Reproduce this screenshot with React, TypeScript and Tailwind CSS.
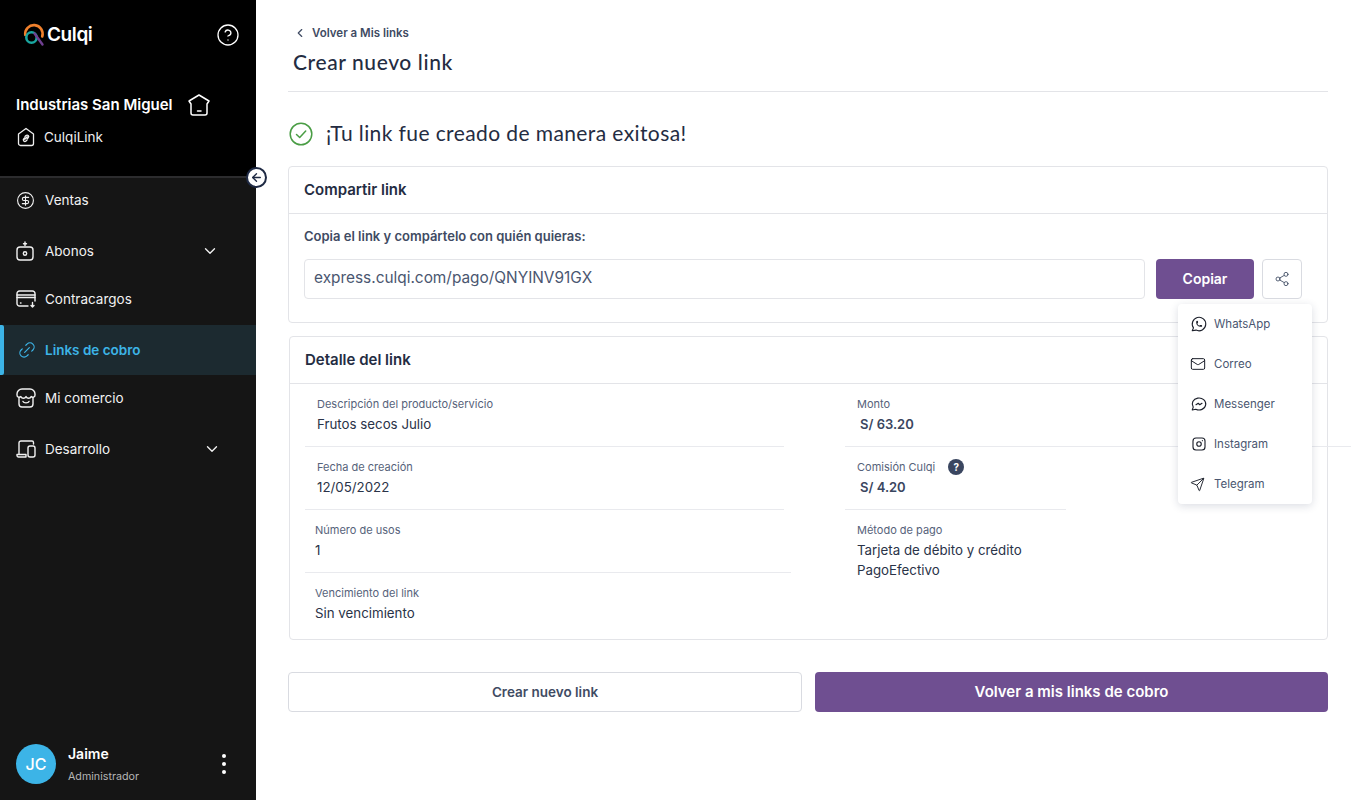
import { ReactNode } from 'react'
import {
  ArrowLeft,
  ChevronDown,
  ChevronLeft,
  CircleDollarSign,
  CircleHelp,
  Link2,
  Mail,
  Send,
  Share2,
} from 'lucide-react'
import { TbBrandInstagram, TbBrandMessenger, TbBrandWhatsapp } from 'react-icons/tb'

function CulqiLogo() {
  return (
    <svg width="22" height="24" viewBox="0 0 22 24" fill="none" className="-mt-[1px]">
      <path d="M2.300 12A8.700 8.700 0 1 1 19.200 13.500" stroke="#f0802c" strokeWidth="2.600" strokeLinecap="round" />
      <circle cx="8.500" cy="14.500" r="5.200" stroke="#1aa6a0" strokeWidth="2.600" />
      <path d="M11.500 10.500l8 11" stroke="#6f3f91" strokeWidth="2.400" strokeLinecap="round" />
    </svg>
  )
}

function CheckIcon() {
  return (
    <svg width="24" height="24" viewBox="0 0 24 24" fill="none" stroke="#4a9d45" strokeWidth="1.500" strokeLinecap="round" strokeLinejoin="round">
      <circle cx="12" cy="12" r="10.800" />
      <path d="M7.500 12.500l3.200 3 6-6.500" />
    </svg>
  )
}

function HomeIcon() {
  return (
    <svg width="24" height="24" viewBox="0 0 24 24" fill="none" stroke="currentColor" strokeWidth="1.500" strokeLinejoin="round" strokeLinecap="round">
      <path d="M12 2 22 8l-2 3v9a2 2 0 0 1-2 2H6a2 2 0 0 1-2-2v-9L2 8z" />
      <path d="M10.500 18h3.500" />
    </svg>
  )
}

function TagLinkIcon() {
  return (
    <svg width="18" height="20" viewBox="0 0 18 20" fill="none" stroke="currentColor" strokeWidth="1.300" strokeLinejoin="round" strokeLinecap="round">
      <path d="M9 1.500 16.500 7v9.500a2 2 0 0 1-2 2h-11a2 2 0 0 1-2-2V7z" />
      <path d="M8 9.500l1-1a1.500 1.500 0 0 1 2.200 2.200l-1 1M10 13l-1 1a1.500 1.500 0 0 1-2.200-2.200l1-1M7.800 12.200l2.400-2.400" />
    </svg>
  )
}

function AbonosIcon() {
  return (
    <svg width="18" height="20" viewBox="0 0 18 20" fill="none" stroke="currentColor" strokeWidth="1.400" strokeLinecap="round" strokeLinejoin="round">
      <rect x="1" y="6" width="16" height="13" rx="3" />
      <circle cx="9" cy="12.500" r="1.700" />
      <path d="M9 1v3.500M7.500 2.700h3" />
    </svg>
  )
}

function ContracargosIcon() {
  return (
    <svg width="20" height="18" viewBox="0 0 20 18" fill="none" stroke="currentColor" strokeWidth="1.400" strokeLinecap="round" strokeLinejoin="round">
      <path d="M12 16H3.500A2.500 2.500 0 0 1 1 13.500v-10A2.500 2.500 0 0 1 3.500 1h13A2.500 2.500 0 0 1 19 3.500V11" />
      <path d="M1 5h18M1 7.500h18M4.500 13h.5M16.500 12.500V17M15 15.500l1.500 1.500 1.500-1.500" />
    </svg>
  )
}

function StoreFaceIcon() {
  return (
    <svg width="20" height="20" viewBox="0 0 20 20" fill="none" stroke="currentColor" strokeWidth="1.400" strokeLinecap="round" strokeLinejoin="round">
      <path d="M6 1h8a5 5 0 0 1 5 5v1a2.200 2.200 0 0 1-3.800 1.600 2.900 2.900 0 0 1-5.200 0 2.900 2.900 0 0 1-5.200 0A2.200 2.200 0 0 1 1 7V6a5 5 0 0 1 5-5z" />
      <path d="M3 10v6a3 3 0 0 0 3 3h8a3 3 0 0 0 3-3v-6" />
      <path d="M7 13.500c.8 1.800 5.200 1.800 6 0" />
    </svg>
  )
}

function DevicesIcon() {
  return (
    <svg width="20" height="18" viewBox="0 0 20 18" fill="none" stroke="currentColor" strokeWidth="1.400" strokeLinecap="round" strokeLinejoin="round">
      <path d="M3 14V3a2 2 0 0 1 2-2h11a1.500 1.500 0 0 1 1.500 1.500V4" />
      <path d="M1 14.500h9v2.500H2.500A1.500 1.500 0 0 1 1 15.500z" />
      <rect x="12" y="6" width="7" height="11" rx="2" />
    </svg>
  )
}

function NavItem({ icon, label, chevron, chevronClass }: { icon: ReactNode; label: string; chevron?: boolean; chevronClass?: string }) {
  return (
    <div className="flex h-full items-center pl-[16px] text-[13.5px] text-[#f1f1f1]">
      <span className="flex w-[29px] shrink-0 items-center">{icon}</span>
      <span>{label}</span>
      {chevron && <ChevronDown className={chevronClass} size={18} strokeWidth={1.800} />}
    </div>
  )
}

function Sidebar() {
  return (
    <aside className="relative flex h-[800px] w-[256px] shrink-0 flex-col bg-[#151515] font-['Inter',sans-serif] text-white">
      <div className="h-[178px] shrink-0 border-b-2 border-[#2c2c2e] bg-black">
        <div className="flex items-center pl-[23px] pr-[16px] pt-[23px]">
          <CulqiLogo />
          <span className="ml-[2px] text-[19px] font-semibold leading-[24px] tracking-[-0.4px]">Culqi</span>
          <CircleHelp className="ml-auto" size={24} strokeWidth={1.300} />
        </div>
        <div className="mt-[46px] flex items-center pl-[16px]">
          <span className="text-[15px] font-semibold leading-[24px]">Industrias San Miguel</span>
          <span className="ml-[14px]"><HomeIcon /></span>
        </div>
        <div className="mt-[10px] flex items-center pl-[17px] text-[13.5px] text-[#eeeeee]">
          <TagLinkIcon />
          <span className="ml-[9px]">CulqiLink</span>
        </div>
      </div>
      <div className="absolute left-[246px] top-[167px] flex h-[21px] w-[21px] items-center justify-center rounded-full border-2 border-[#1f2a44] bg-white text-[#1f2a44]">
        <ArrowLeft size={13} strokeWidth={2.500} />
      </div>
      <nav>
        <div className="h-[44px]"><NavItem icon={<CircleDollarSign size={19} strokeWidth={1.400} />} label="Ventas" /></div>
        <div className="h-[58px]"><NavItem icon={<AbonosIcon />} label="Abonos" chevron chevronClass="ml-auto mr-[37px]" /></div>
        <div className="mb-[7px] h-[38px]"><NavItem icon={<ContracargosIcon />} label="Contracargos" /></div>
        <div className="flex h-[50px] items-center bg-[#1c2a30] text-[#3cb4e7]">
          <span className="h-full w-[4px] rounded-r-[2px] bg-[#3cb4e7]" />
          <Link2 className="ml-[13px] -rotate-45" size={20} strokeWidth={1.400} />
          <span className="ml-[8px] text-[13.5px] font-semibold">Links de cobro</span>
        </div>
        <div className="h-[46px]"><NavItem icon={<StoreFaceIcon />} label="Mi comercio" /></div>
        <div className="h-[56px]"><NavItem icon={<DevicesIcon />} label="Desarrollo" chevron chevronClass="ml-auto mr-[35px]" /></div>
      </nav>
      <div className="mt-auto flex items-center pb-[16px] pl-[16px] pr-[30px]">
        <div className="flex h-[40px] w-[40px] items-center justify-center rounded-full bg-[#3cb4e7] text-[16px] font-medium">JC</div>
        <div className="ml-[12px]">
          <div className="text-[14px] font-semibold leading-[20px]">Jaime</div>
          <div className="mt-[6px] text-[10.7px] leading-[14px] text-[#b5b5b5]">Administrador</div>
        </div>
        <div className="ml-auto flex flex-col gap-[4px]">
          <span className="h-[4px] w-[4px] rounded-full bg-white" />
          <span className="h-[4px] w-[4px] rounded-full bg-white" />
          <span className="h-[4px] w-[4px] rounded-full bg-white" />
        </div>
      </div>
    </aside>
  )
}

function Field({ label, value, className, strong, children }: { label: string; value: ReactNode; className: string; strong?: boolean; children?: ReactNode }) {
  return (
    <div className={className}>
      <div className="flex items-center text-[11px] leading-[16px] text-[#56627a]">
        {label}
        {children}
      </div>
      <div className={strong ? 'mt-[2px] pl-[3px] text-[13px] font-semibold leading-[20px] text-[#3a4660]' : 'mt-[2px] text-[13.3px] leading-[20px] text-[#2a3348]'}>{value}</div>
    </div>
  )
}

const shareItems = [
  { label: 'WhatsApp', icon: <TbBrandWhatsapp size={18} strokeWidth={1.500} /> },
  { label: 'Correo', icon: <Mail size={16} strokeWidth={1.500} /> },
  { label: 'Messenger', icon: <TbBrandMessenger size={18} strokeWidth={1.500} /> },
  { label: 'Instagram', icon: <TbBrandInstagram size={18} strokeWidth={1.500} /> },
  { label: 'Telegram', icon: <Send size={15} strokeWidth={1.500} /> },
]

function ShareMenu() {
  return (
    <div className="absolute left-[889px] top-[137px] z-10 w-[134px] rounded-[4px] bg-white shadow-[0_2px_8px_rgba(30,41,80,0.16)]">
      {shareItems.map((item) => (
        <div key={item.label} className="flex h-[40px] items-center pl-[12px] text-[11.5px] text-[#4a5670]">
          <span className="flex w-[24px] items-center text-[#1b1f2a]">{item.icon}</span>
          <span className="pt-[1px]">{item.label}</span>
        </div>
      ))}
    </div>
  )
}

function Main() {
  return (
    <main className="min-w-0 flex-1 overflow-hidden pl-[32px] pr-[32px] pt-[24px] font-['Inter',sans-serif]">
      <div className="flex w-[1040px] items-center pl-[5px] text-[11.5px] font-semibold leading-[18px] text-[#3f4b63]">
        <ChevronLeft size={14} strokeWidth={2} />
        <span className="ml-[5px]">Volver a Mis links</span>
      </div>
      <h1 className="mt-[6px] w-[1040px] border-b border-[#e3e4e8] pb-[16px] pl-[5px] font-['Lato',sans-serif] text-[21px] font-medium leading-[27px] tracking-[0.6px] text-[#242c42]">Crear nuevo link</h1>
      <div className="mt-[28px] flex h-[28px] items-center pl-[1px]">
        <CheckIcon />
        <span className="ml-[13px] pb-[2px] font-['Lato',sans-serif] text-[21px] leading-[28px] tracking-[0.4px] text-[#242c42]">¡Tu link fue creado de manera exitosa!</span>
      </div>

      <section className="relative mt-[18px] h-[157px] w-[1040px] rounded-[4px] border border-[#e3e4e8]">
        <div className="flex h-[47px] items-center border-b border-[#e3e4e8] pl-[15px] text-[15px] font-semibold text-[#242c42]">Compartir link</div>
        <div className="pl-[15px] pt-[13px] text-[13px] font-semibold leading-[18px] text-[#3f4b63]">Copia el link y compártelo con quién quieras:</div>
        <div className="mt-[14px] flex items-center pl-[15px]">
          <div className="flex h-[40px] w-[841px] items-center rounded-[4px] border border-[#e3e4e8] pb-[2px] pl-[9px] text-[15.4px] text-[#4a5670]">express.culqi.com/pago/QNYINV91GX</div>
          <button className="ml-[11px] h-[40px] w-[98px] rounded-[4px] bg-[#6f4f91] pb-[1px] text-[14px] font-semibold text-white">Copiar</button>
          <button className="ml-[8px] flex h-[40px] w-[40px] items-center justify-center rounded-[4px] border border-[#d9dbe1] text-[#3f4b63]">
            <Share2 size={16} strokeWidth={1.300} />
          </button>
        </div>
        <ShareMenu />
      </section>

      <section className="relative ml-[1px] mt-[13px] h-[304px] w-[1039px] rounded-[4px] border border-[#e3e4e8]">
        <div className="flex h-[47px] items-center border-b border-[#e3e4e8] pl-[15px] text-[15px] font-semibold text-[#242c42]">Detalle del link</div>
        <div className="flex pl-[15px]">
          <div className="w-[540px] shrink-0">
            <Field className="h-[63px] w-[479px] border-b border-[#e9eaee] pl-[12px] pt-[12px]" label="Descripción del producto/servicio" value="Frutos secos Julio" />
            <Field className="h-[63px] w-[479px] border-b border-[#e9eaee] pl-[12px] pt-[12px]" label="Fecha de creación" value="12/05/2022" />
            <Field className="h-[63px] w-[486px] border-b border-[#e9eaee] pl-[10px] pt-[12px]" label="Número de usos" value="1" />
            <Field className="h-[63px] w-[486px] pl-[10px] pt-[12px]" label="Vencimiento del link" value="Sin vencimiento" />
          </div>
          <div>
            <Field className="h-[63px] w-[506px] border-b border-[#e9eaee] pl-[12px] pt-[12px]" label="Monto" value="S/ 63.20" strong />
            <Field className="h-[63px] w-[221px] border-b border-[#e9eaee] pl-[12px] pt-[12px]" label="Comisión Culqi" value="S/ 4.20" strong>
              <span className="ml-[13px] flex h-[16px] w-[16px] items-center justify-center rounded-full bg-[#3a4660] text-[10px] font-bold text-white">?</span>
            </Field>
            <Field
              className="w-[260px] pl-[12px] pt-[12px]"
              label="Método de pago"
              value={<>Tarjeta de débito y crédito<br />PagoEfectivo</>}
            />
          </div>
        </div>
      </section>

      <div className="mt-[32px] flex w-[1040px] gap-[13px]">
        <button className="h-[40px] w-[514px] rounded-[4px] border border-[#d9dbe1] bg-white text-[13.5px] font-semibold text-[#3f4b63]">Crear nuevo link</button>
        <button className="h-[40px] w-[513px] rounded-[4px] bg-[#6f4f91] text-[15px] font-semibold text-white">Volver a mis links de cobro</button>
      </div>
    </main>
  )
}

export default function App() {
  return (
    <div className="flex h-[800px] w-[1360px] overflow-hidden bg-white">
      <Sidebar />
      <Main />
    </div>
  )
}
